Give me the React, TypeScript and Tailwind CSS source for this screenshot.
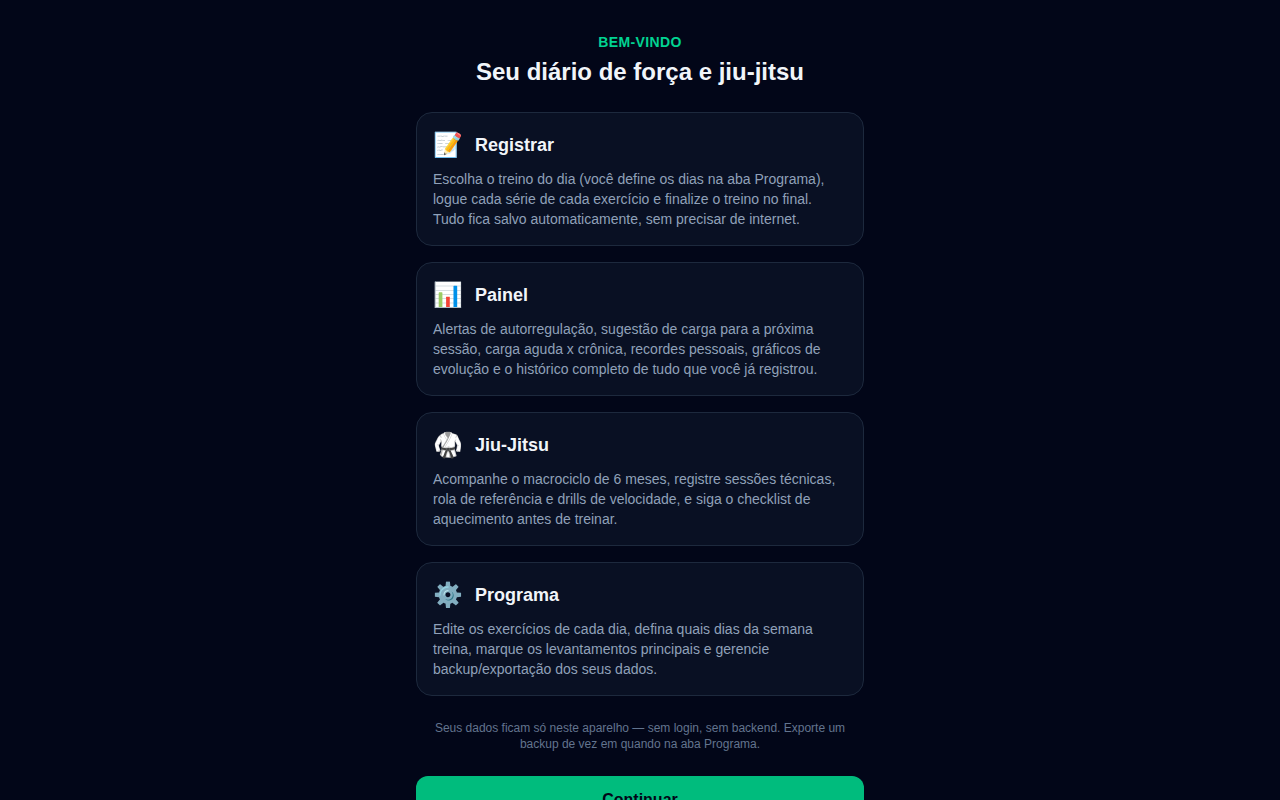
interface Feature {
  icon: string;
  title: string;
  description: string;
}

const FEATURES: Feature[] = [
  {
    icon: '📝',
    title: 'Registrar',
    description:
      'Escolha o treino do dia (você define os dias na aba Programa), logue cada série de cada exercício e finalize o treino no final. Tudo fica salvo automaticamente, sem precisar de internet.',
  },
  {
    icon: '📊',
    title: 'Painel',
    description:
      'Alertas de autorregulação, sugestão de carga para a próxima sessão, carga aguda x crônica, recordes pessoais, gráficos de evolução e o histórico completo de tudo que você já registrou.',
  },
  {
    icon: '🥋',
    title: 'Jiu-Jitsu',
    description:
      'Acompanhe o macrociclo de 6 meses, registre sessões técnicas, rola de referência e drills de velocidade, e siga o checklist de aquecimento antes de treinar.',
  },
  {
    icon: '⚙️',
    title: 'Programa',
    description:
      'Edite os exercícios de cada dia, defina quais dias da semana treina, marque os levantamentos principais e gerencie backup/exportação dos seus dados.',
  },
];

function FeatureCard({ icon, title, description }: Feature) {
  return (
    <section className="rounded-2xl border border-slate-800 bg-slate-900/60 p-4">
      <div className="flex items-center gap-3">
        <span className="text-2xl" aria-hidden="true">
          {icon}
        </span>
        <h2 className="text-lg font-semibold text-slate-100">{title}</h2>
      </div>
      <p className="mt-2 text-sm text-slate-400">{description}</p>
    </section>
  );
}

export default function App() {
  return (
    <div className="min-h-screen bg-slate-950 font-['Liberation_Sans',sans-serif] text-slate-100">
      <main className="mx-auto flex max-w-md flex-col gap-6 py-8">
        <header className="text-center">
          <p className="text-sm font-semibold tracking-wide text-emerald-400 uppercase">Bem-vindo</p>
          <h1 className="mt-1 text-2xl font-bold">Seu diário de força e jiu-jitsu</h1>
        </header>

        <div className="flex flex-col gap-4">
          {FEATURES.map((feature) => (
            <FeatureCard key={feature.title} {...feature} />
          ))}
        </div>

        <p className="px-4 text-center text-xs text-slate-500">
          Seus dados ficam só neste aparelho — sem login, sem backend. Exporte um backup de vez em quando na aba
          Programa.
        </p>

        <button
          type="button"
          className="w-full rounded-xl bg-emerald-500 py-3 text-base font-semibold text-slate-950"
        >
          Continuar
        </button>
      </main>
    </div>
  );
}
